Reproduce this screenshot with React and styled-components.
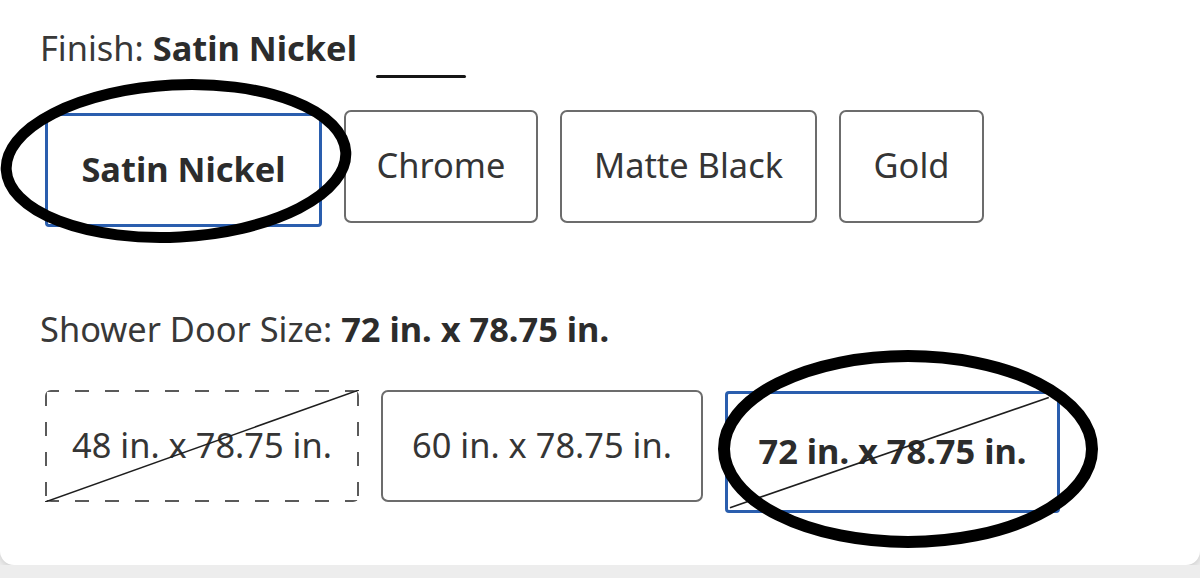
import styled, { createGlobalStyle, css } from "styled-components";

const GlobalStyle = createGlobalStyle`
  html, body {
    margin: 0;
    padding: 0;
    background: #ededed;
  }
  body {
    font-family: "Noto Sans", "Open Sans", sans-serif;
    color: #333;
  }
`;

const Card = styled.div`
  position: relative;
  box-sizing: border-box;
  width: 1200px;
  height: 565px;
  padding: 28px 0 0 40px;
  background: #fff;
  border-radius: 0 0 14px 14px;
  box-shadow: 0 2px 6px rgba(0, 0, 0, 0.14);
`;

const Header = styled.div`
  display: flex;
  align-items: flex-start;
  height: 40px;
  margin-top: ${({ $top }) => $top || 0}px;
`;

const Label = styled.div`
  font-size: 34.4px;
  line-height: 40px;
  color: #383838;
  white-space: nowrap;
  b {
    font-weight: 700;
    color: #2c2c2c;
  }
`;

const Underline = styled.span`
  display: block;
  width: 90px;
  height: 3px;
  margin: 47px 0 0 19px;
  border-radius: 2px;
  background: #161616;
`;

const Row = styled.div`
  display: flex;
  align-items: flex-start;
  gap: 22px;
  margin: ${({ $top }) => $top}px 0 0 5px;
`;

const dashed = css`
  border: none;
  border-radius: 6px;
  background:
    repeating-linear-gradient(90deg, #5a5a5a 0 14px, transparent 14px 30px) left top / 100% 2px no-repeat,
    repeating-linear-gradient(90deg, #5a5a5a 0 14px, transparent 14px 30px) left bottom / 100% 2px no-repeat,
    repeating-linear-gradient(180deg, #5a5a5a 0 14px, transparent 14px 30px) left 2px / 2px 100% no-repeat,
    repeating-linear-gradient(180deg, #5a5a5a 0 14px, transparent 14px 30px) right 2px / 2px 100% no-repeat;
`;

const Chip = styled.div`
  position: relative;
  box-sizing: border-box;
  display: flex;
  align-items: center;
  justify-content: center;
  width: ${({ $w }) => $w}px;
  height: ${({ $h }) => $h}px;
  margin-top: ${({ $shift }) => $shift || 0}px;
  padding-bottom: 4px;
  border: 2px solid #6c6c6c;
  border-radius: 7px;
  background: #fff;
  font-size: 34.4px;
  color: #353535;
  white-space: nowrap;

  ${({ $selected }) =>
    $selected &&
    css`
      border: 3.5px solid #2a5eae;
      border-radius: 4px;
      font-weight: 700;
      color: #2c2c2c;
    `}

  ${({ $unavailable }) => $unavailable && dashed}
`;

const Slash = styled.svg`
  position: absolute;
  inset: 0;
  width: 100%;
  height: 100%;
  pointer-events: none;
`;

const Marks = styled.svg`
  position: absolute;
  top: 0;
  left: 0;
  width: 1200px;
  height: 578px;
  pointer-events: none;
  overflow: visible;
`;

const finishes = [
  { name: "Satin Nickel", w: 277, selected: true },
  { name: "Chrome", w: 194 },
  { name: "Matte Black", w: 257 },
  { name: "Gold", w: 145 },
];

const sizes = [
  { name: "48 in. x 78.75 in.", w: 314, unavailable: true },
  { name: "60 in. x 78.75 in.", w: 322 },
  { name: "72 in. x 78.75 in.", w: 335, selected: true, unavailable: true },
];

function StrikeLine({ inset }) {
  return (
    <Slash viewBox="0 0 100 100" preserveAspectRatio="none">
      <line
        x1={inset ? 0.6 : 0}
        y1={inset ? 98 : 100}
        x2={inset ? 97.5 : 100}
        y2={inset ? 3 : 0}
        stroke="#1e1e1e"
        strokeWidth="1.6"
        vectorEffect="non-scaling-stroke"
      />
    </Slash>
  );
}

export default function App() {
  return (
    <>
      <GlobalStyle />
      <Card>
        <Header>
          <Label>
            Finish: <b>Satin Nickel</b>
          </Label>
          <Underline />
        </Header>
        <Row $top={42}>
          {finishes.map((f) => (
            <Chip
              key={f.name}
              $w={f.w}
              $h={f.selected ? 114 : 113}
              $shift={f.selected ? 3 : 0}
              $selected={f.selected}
            >
              {f.name}
            </Chip>
          ))}
        </Row>

        <Header $top={82}>
          <Label>
            Shower Door Size: <b>72 in. x 78.75 in.</b>
          </Label>
        </Header>
        <Row $top={41}>
          {sizes.map((s) => (
            <Chip
              key={s.name}
              $w={s.w}
              $h={s.selected ? 122 : 112}
              $shift={s.selected ? 1 : 0}
              $selected={s.selected}
              $unavailable={s.unavailable && !s.selected}
            >
              {s.name}
              {s.unavailable && <StrikeLine inset={s.selected} />}
            </Chip>
          ))}
        </Row>

        <Marks viewBox="0 0 1200 578">
          <ellipse
            cx="176"
            cy="161"
            rx="170"
            ry="76"
            transform="rotate(-3 176 161)"
            fill="none"
            stroke="#000"
            strokeWidth="11"
          />
          <ellipse
            cx="908"
            cy="449"
            rx="184"
            ry="93"
            fill="none"
            stroke="#000"
            strokeWidth="12"
          />
        </Marks>
      </Card>
    </>
  );
}
